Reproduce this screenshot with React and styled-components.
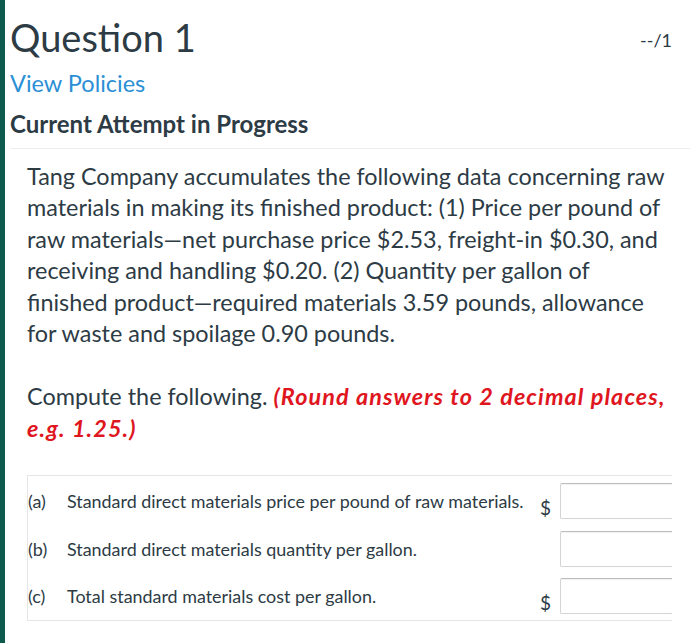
import React from "react";
import styled, { createGlobalStyle } from "styled-components";

const GlobalStyle = createGlobalStyle`
  html, body {
    margin: 0;
    padding: 0;
    background: #ffffff;
    overflow: hidden;
  }
  body {
    font-family: Lato, "Open Sans", sans-serif;
    color: #2d3b45;
  }
`;

const rows = [
  { key: "a", text: "Standard direct materials price per pound of raw materials.", dollar: true },
  { key: "b", text: "Standard direct materials quantity per gallon.", dollar: false },
  { key: "c", text: "Total standard materials cost per gallon.", dollar: true },
];

const App = () => {
  return (
    <>
      <GlobalStyle />
      <Page>
        <Content>
          <Header>
            <Title>Question 1</Title>
            <Score>--/1</Score>
          </Header>
          <PolicyLink href="#">View Policies</PolicyLink>
          <Attempt>Current Attempt in Progress</Attempt>
          <Divider />
          <Body>
            <Paragraph>
              Tang Company accumulates the following data concerning raw
              materials in making its finished product: (1) Price per pound of
              raw materials—net purchase price $2.53, freight-in $0.30, and
              receiving and handling $0.20. (2) Quantity per gallon of finished
              product—required materials 3.59 pounds, allowance for waste and
              spoilage 0.90 pounds.
            </Paragraph>
            <Paragraph>
              Compute the following.{" "}
              <Warning>(Round answers to 2 decimal places, e.g. 1.25.)</Warning>
            </Paragraph>
            <AnswerTable>
              {rows.map((row) => (
                <Row key={row.key}>
                  <Letter>({row.key})</Letter>
                  <Label>{row.text}</Label>
                  <Dollar>{row.dollar ? "$" : ""}</Dollar>
                  <Input type="text" />
                </Row>
              ))}
            </AnswerTable>
          </Body>
        </Content>
      </Page>
    </>
  );
};

export default App;

const Page = styled.div`
  display: flex;
  width: 700px;
  height: 643px;
  border-left: 5px solid #0f5a4e;
  box-sizing: border-box;
`;

const Content = styled.div`
  flex: 1;
  display: flex;
  flex-direction: column;
  padding: 14px 10px 0 5px;
`;

const Header = styled.div`
  display: flex;
  justify-content: space-between;
  align-items: flex-start;
`;

const Title = styled.h1`
  margin: 0;
  font-size: 38px;
  font-weight: 400;
  line-height: 46px;
  color: #2d3b45;
`;

const Score = styled.span`
  font-size: 18px;
  margin-top: 15px;
  margin-right: 18px;
  color: #2d3b45;
`;

const PolicyLink = styled.a`
  margin-top: 9px;
  font-size: 23.5px;
  line-height: 29px;
  color: #2b8fd6;
  text-decoration: none;
  align-self: flex-start;
`;

const Attempt = styled.div`
  margin-top: 11px;
  font-size: 24px;
  font-weight: 700;
  line-height: 29px;
`;

const Divider = styled.hr`
  margin: 10px 0 0;
  border: none;
  border-top: 1px solid #eceef0;
`;

const Body = styled.div`
  padding: 12px 0 0 17px;
  display: flex;
  flex-direction: column;
`;

const Paragraph = styled.p`
  max-width: 642px;
  margin: 0 0 32px;
  font-size: 23.4px;
  line-height: 31.4px;
  color: #2d3b45;
`;

const Warning = styled.span`
  color: #e0161e;
  font-weight: 700;
  font-style: italic;
  letter-spacing: 1.1px;
`;

const AnswerTable = styled.div`
  width: 645px;
  margin-top: -1px;
  border: 1px solid #e6e6e6;
  border-right: none;
  display: flex;
  flex-direction: column;
  padding: 1px 0 0;
  box-sizing: border-box;
`;

const Row = styled.div`
  display: flex;
  align-items: center;
  height: 47.5px;
`;

const Letter = styled.span`
  width: 39px;
  font-size: 18px;
`;

const Label = styled.span`
  flex: 1;
  font-size: 17.9px;
  white-space: nowrap;
`;

const Dollar = styled.span`
  width: 20px;
  font-size: 19px;
  padding-top: 12px;
  text-align: left;
`;

const Input = styled.input`
  width: 112px;
  height: 36px;
  box-sizing: border-box;
  border: 1px solid #d4d4d4;
  border-top-color: #bdbdbd;
  border-right: none;
  border-radius: 2px 0 0 2px;
  box-shadow: inset 0 1px 1px rgba(0, 0, 0, 0.06);
  outline: none;
`;
